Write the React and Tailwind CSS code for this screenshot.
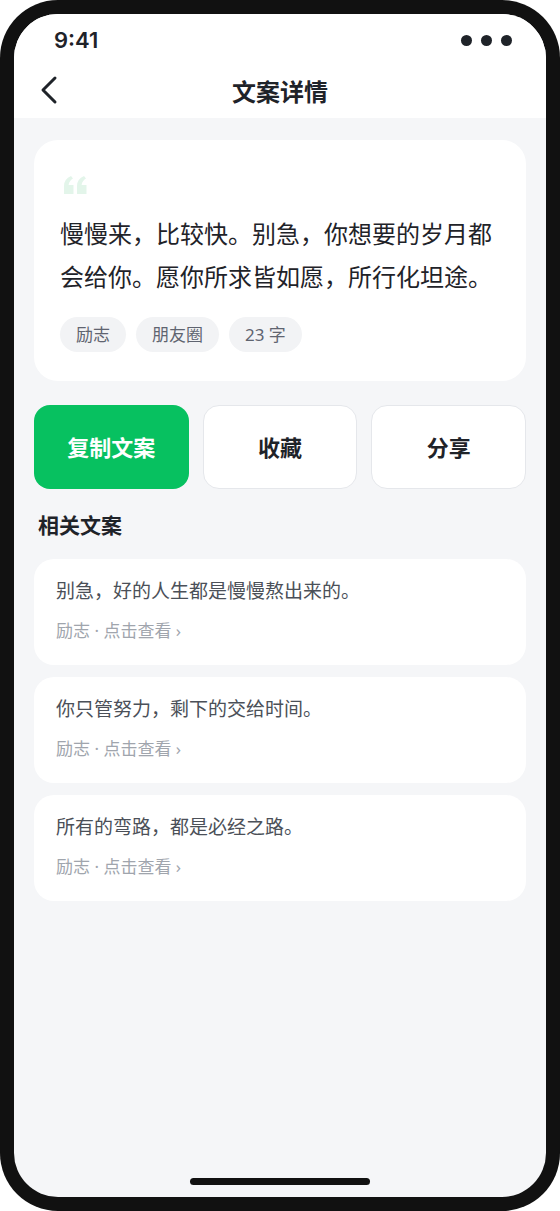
export default function App() {
  const related = [
    "别急，好的人生都是慢慢熬出来的。",
    "你只管努力，剩下的交给时间。",
    "所有的弯路，都是必经之路。",
  ];
  const font = { fontFamily: '"Noto Sans", "Noto Sans CJK SC", sans-serif' };

  return (
    <div className="w-[560px] h-[1211px] bg-[#111111] rounded-[58px] p-[14px]" style={font}>
      <div className="w-full h-full bg-[#f5f6f8] rounded-[44px] overflow-hidden flex flex-col">
        <div className="bg-white">
          <div className="h-[52px] flex items-center justify-between pl-[40px] pr-[34px]">
            <span className="text-[22px] font-semibold text-[#1f2329] leading-none" style={{ fontFamily: 'Inter, "Noto Sans", sans-serif' }}>9:41</span>
            <div className="flex gap-[9px]">
              <span className="w-[11px] h-[11px] rounded-full bg-[#1f2329]" />
              <span className="w-[11px] h-[11px] rounded-full bg-[#1f2329]" />
              <span className="w-[11px] h-[11px] rounded-full bg-[#1f2329]" />
            </div>
          </div>
          <div className="h-[52px] relative flex items-center justify-center">
            <svg className="absolute left-[24px] top-[9px]" width="22" height="30" viewBox="0 0 22 30" fill="none">
              <path d="M17 3 L5 15 L17 27" stroke="#1f2329" strokeWidth="3" strokeLinecap="round" strokeLinejoin="round" />
            </svg>
            <span className="text-[24px] font-bold text-[#1f2329]">文案详情</span>
          </div>
        </div>

        <div className="px-[20px] pt-[22px] flex flex-col">
          <div className="bg-white rounded-[24px] px-[26px] pt-[36px] pb-[29px]">
            {/* decorative quote mark */}
            <svg className="ml-[4px]" width="23" height="18" viewBox="0 0 23 18" fill="#e3f5ea">
              <path d="M0 18 V10 Q0 3 7 0 L9 2.5 Q5 5 4.6 9 H9.5 V18 Z" />
              <path d="M13 18 V10 Q13 3 20 0 L22 2.5 Q18 5 17.6 9 H22.5 V18 Z" />
            </svg>
            <p className="mt-[18px] text-[24px] leading-[43px] text-[#1f2329]">
              慢慢来，比较快。别急，你想要的岁月都会给你。愿你所求皆如愿，所行化坦途。
            </p>
            <div className="mt-[19px] flex gap-[10px]">
              {["励志", "朋友圈", "23 字"].map((t) => (
                <span key={t} className="h-[35px] px-[16px] rounded-full bg-[#f2f3f5] text-[17px] text-[#5f6470] flex items-center">{t}</span>
              ))}
            </div>
          </div>

          <div className="mt-[24px] grid grid-cols-3 gap-[14px]">
            <button className="h-[84px] rounded-[16px] bg-[#07c160] text-white text-[22px] font-bold">复制文案</button>
            <button className="h-[84px] rounded-[16px] bg-white border border-[#e5e7eb] text-[#1f2329] text-[22px] font-bold">收藏</button>
            <button className="h-[84px] rounded-[16px] bg-white border border-[#e5e7eb] text-[#1f2329] text-[22px] font-bold">分享</button>
          </div>

          <h2 className="mt-[20px] pl-[4px] text-[21px] font-bold text-[#1f2329] leading-[32px]">相关文案</h2>

          <div className="mt-[18px] flex flex-col gap-[12px]">
            {related.map((r) => (
              <div key={r} className="bg-white rounded-[20px] px-[22px] pt-[17px] h-[106px]">
                <p className="text-[19px] leading-[30px] text-[#4b5058]">{r}</p>
                <p className="mt-[12px] text-[17px] leading-[26px] text-[#a0a5ad]">励志 · 点击查看 ›</p>
              </div>
            ))}
          </div>
        </div>

        <div className="mt-auto pb-[12px] flex justify-center">
          <span className="w-[180px] h-[7px] rounded-full bg-[#111111]" />
        </div>
      </div>
    </div>
  );
}
